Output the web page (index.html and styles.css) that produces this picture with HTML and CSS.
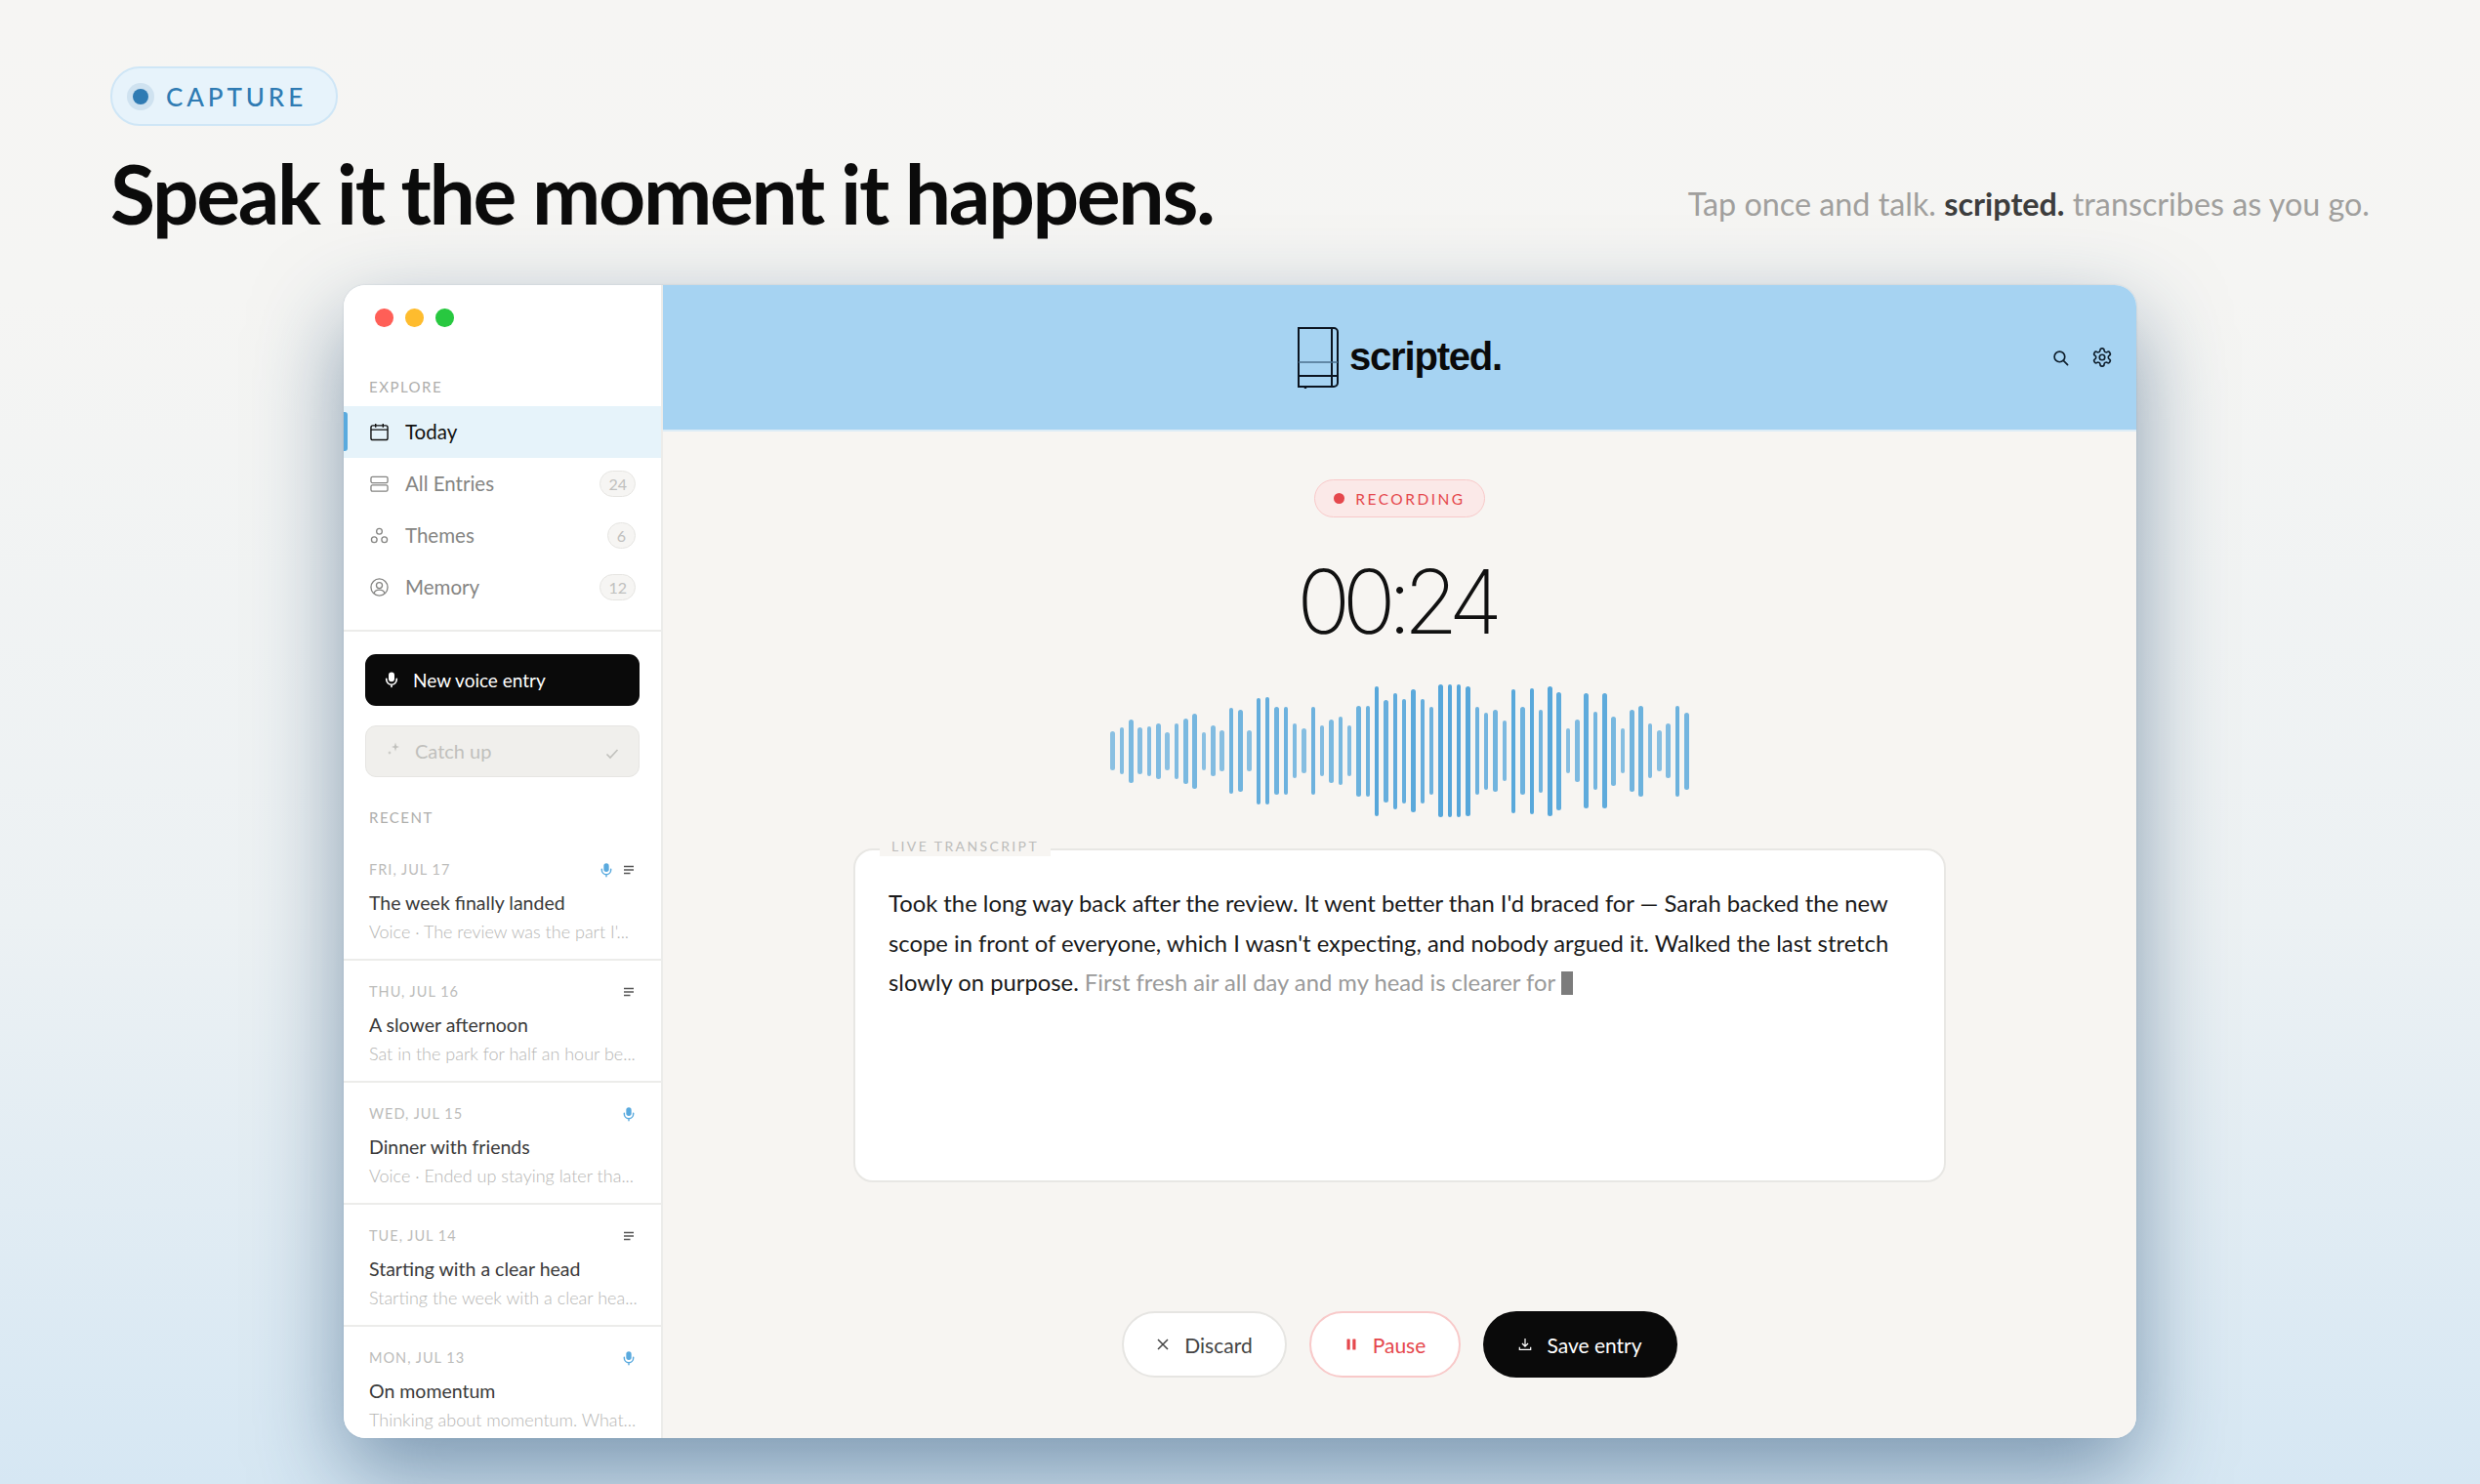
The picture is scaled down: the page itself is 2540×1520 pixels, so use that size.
FILE: index.html
```html
<!DOCTYPE html>
<html lang="en">
<head>
    <meta charset="UTF-8">
    <meta name="viewport" content="width=device-width, initial-scale=1.0">
    <title>scripted. - Capture</title>
    <link rel="stylesheet" href="styles.css">
</head>
<body>
    <svg class="icon-defs" width="0" height="0">
        <symbol id="i-mic" viewBox="0 0 24 24">
            <rect x="8" y="2" width="8" height="13" rx="4" fill="currentColor"/>
            <path d="M5 11v1a7 7 0 0 0 14 0v-1M12 19v3" fill="none" stroke="currentColor" stroke-width="2.2" stroke-linecap="round"/>
        </symbol>
        <symbol id="i-lines" viewBox="0 0 24 24">
            <path d="M2 5h20M2 12h20M2 19h13" fill="none" stroke="currentColor" stroke-width="2.6"/>
        </symbol>
    </svg>

    <header class="page-head">
        <div class="eyebrow"><span class="eyebrow-dot"></span>CAPTURE</div>
        <div class="head-row">
            <h1>Speak it the moment it happens.</h1>
            <p class="tagline">Tap once and talk. <strong>scripted.</strong> transcribes as you go.</p>
        </div>
    </header>

    <div class="window">
        <aside class="sidebar">
            <div class="traffic">
                <span class="light red"></span>
                <span class="light yellow"></span>
                <span class="light green"></span>
            </div>
            <div class="section-label explore-label">EXPLORE</div>
            <nav class="nav">
                <a class="nav-item active">
                    <svg class="nav-icon" viewBox="0 0 20 20" fill="none" stroke="currentColor" stroke-width="1.5"><rect x="1" y="3" width="18" height="15.5" rx="2"/><path d="M1 7.5h18M6 1v4M14 1v4"/></svg>
                    <span>Today</span>
                </a>
                <a class="nav-item">
                    <svg class="nav-icon" viewBox="0 0 20 20" fill="none" stroke="currentColor" stroke-width="1.4"><rect x="1" y="2.5" width="18" height="6.5" rx="1.6"/><rect x="1" y="11.5" width="18" height="6.5" rx="1.6"/></svg>
                    <span>All Entries</span>
                    <b class="count">24</b>
                </a>
                <a class="nav-item">
                    <svg class="nav-icon" viewBox="0 0 20 20" fill="none" stroke="currentColor" stroke-width="1.4"><circle cx="10" cy="5.5" r="3"/><circle cx="4.5" cy="14.5" r="3"/><circle cx="15.5" cy="14.5" r="3"/></svg>
                    <span>Themes</span>
                    <b class="count">6</b>
                </a>
                <a class="nav-item">
                    <svg class="nav-icon" viewBox="0 0 20 20" fill="none" stroke="currentColor" stroke-width="1.4"><circle cx="10" cy="10" r="9"/><circle cx="10" cy="8" r="3.2"/><path d="M4.2 16.6c.8-2.6 3-3.8 5.8-3.8s5 1.2 5.8 3.8"/></svg>
                    <span>Memory</span>
                    <b class="count">12</b>
                </a>
            </nav>
            <div class="side-actions">
                <button class="btn-new">
                    <svg class="btn-new-icon"><use href="#i-mic"/></svg>
                    New voice entry
                </button>
                <button class="btn-catch">
                    <svg class="sparkle" viewBox="0 0 16 16" fill="currentColor"><path d="M9 1.5l1 3.5 3 1-3 1-1 3.5-1-3.5-3-1 3-1zM3 10l.6 1.6 1.4.5-1.4.5L3 14l-.6-1.4-1.4-.5 1.4-.5z"/></svg>
                    <span>Catch up</span>
                    <svg class="check" viewBox="0 0 14 14" fill="none" stroke="currentColor" stroke-width="1.6"><path d="M1.5 7.5l3.5 3.5 7.5-8"/></svg>
                </button>
            </div>
            <div class="section-label recent-label">RECENT</div>
            <div class="entries">
                <div class="entry">
                    <div class="entry-top">
                        <span class="entry-date">FRI, JUL 17</span>
                        <svg class="mini mic"><use href="#i-mic"/></svg>
                        <svg class="mini lines"><use href="#i-lines"/></svg>
                    </div>
                    <div class="entry-title">The week finally landed</div>
                    <div class="entry-preview">Voice · The review was the part I'...</div>
                </div>
                <div class="entry">
                    <div class="entry-top">
                        <span class="entry-date">THU, JUL 16</span>
                        <svg class="mini lines"><use href="#i-lines"/></svg>
                    </div>
                    <div class="entry-title">A slower afternoon</div>
                    <div class="entry-preview">Sat in the park for half an hour be...</div>
                </div>
                <div class="entry">
                    <div class="entry-top">
                        <span class="entry-date">WED, JUL 15</span>
                        <svg class="mini mic"><use href="#i-mic"/></svg>
                    </div>
                    <div class="entry-title">Dinner with friends</div>
                    <div class="entry-preview">Voice · Ended up staying later tha...</div>
                </div>
                <div class="entry">
                    <div class="entry-top">
                        <span class="entry-date">TUE, JUL 14</span>
                        <svg class="mini lines"><use href="#i-lines"/></svg>
                    </div>
                    <div class="entry-title">Starting with a clear head</div>
                    <div class="entry-preview">Starting the week with a clear hea...</div>
                </div>
                <div class="entry">
                    <div class="entry-top">
                        <span class="entry-date">MON, JUL 13</span>
                        <svg class="mini mic"><use href="#i-mic"/></svg>
                    </div>
                    <div class="entry-title">On momentum</div>
                    <div class="entry-preview">Thinking about momentum. What...</div>
                </div>
            </div>
        </aside>

        <main class="main">
            <div class="topbar">
                <div class="brand">
                    <svg class="brand-mark" viewBox="0 0 42 63" fill="none" stroke="#0b1420" stroke-width="2">
                        <path d="M1 1h36a4 4 0 0 1 4 4v52a4 4 0 0 1-4 4H1z"/>
                        <path d="M35 1v60"/>
                        <path d="M1 36h40" stroke="#4a6f8c" stroke-width="1.6"/>
                        <path d="M1 50h40"/>
                        <path d="M8 61v3" stroke-width="2.4"/>
                    </svg>
                    <span class="brand-name">scripted.</span>
                </div>
                <div class="top-icons">
                    <svg class="search" viewBox="0 0 24 24" fill="none" stroke="currentColor" stroke-width="2.4" stroke-linecap="round"><circle cx="10.5" cy="10.5" r="7.5"/><path d="M16 16l6 6"/></svg>
                    <svg class="gear" viewBox="0 0 24 24" fill="none" stroke="currentColor" stroke-width="1.8" stroke-linejoin="round"><path d="M12.22 2h-.44a2 2 0 0 0-2 2v.18a2 2 0 0 1-1 1.73l-.43.25a2 2 0 0 1-2 0l-.15-.08a2 2 0 0 0-2.73.73l-.22.38a2 2 0 0 0 .73 2.73l.15.1a2 2 0 0 1 1 1.72v.51a2 2 0 0 1-1 1.74l-.15.09a2 2 0 0 0-.73 2.73l.22.38a2 2 0 0 0 2.73.73l.15-.08a2 2 0 0 1 2 0l.43.25a2 2 0 0 1 1 1.73V20a2 2 0 0 0 2 2h.44a2 2 0 0 0 2-2v-.18a2 2 0 0 1 1-1.73l.43-.25a2 2 0 0 1 2 0l.15.08a2 2 0 0 0 2.73-.73l.22-.39a2 2 0 0 0-.73-2.73l-.15-.08a2 2 0 0 1-1-1.74v-.5a2 2 0 0 1 1-1.74l.15-.09a2 2 0 0 0 .73-2.73l-.22-.38a2 2 0 0 0-2.73-.73l-.15.08a2 2 0 0 1-2 0l-.43-.25a2 2 0 0 1-1-1.73V4a2 2 0 0 0-2-2z"/><circle cx="12" cy="12" r="3"/></svg>
                </div>
            </div>

            <div class="capture">
                <div class="rec-pill"><span class="rec-dot"></span>RECORDING</div>
                <div class="timer">00:24</div>
                <div class="wave" id="wave"></div>
                <div class="transcript">
                    <span class="transcript-label">LIVE TRANSCRIPT</span>
                    <p>Took the long way back after the review. It went better than I'd braced for — Sarah backed the new scope in front of everyone, which I wasn't expecting, and nobody argued it. Walked the last stretch slowly on purpose. <span class="interim">First fresh air all day and my head is clearer for</span> <span class="caret"></span></p>
                </div>
                <div class="controls">
                    <button class="pill-btn discard">
                        <svg viewBox="0 0 14 14" fill="none" stroke="currentColor" stroke-width="1.5"><path d="M2 2l10 10M12 2L2 12"/></svg>
                        Discard
                    </button>
                    <button class="pill-btn pause">
                        <svg viewBox="0 0 14 14" fill="currentColor"><rect x="2.5" y="1.5" width="3.2" height="11" rx=".6"/><rect x="8.3" y="1.5" width="3.2" height="11" rx=".6"/></svg>
                        Pause
                    </button>
                    <button class="pill-btn save">
                        <svg viewBox="0 0 16 16" fill="none" stroke="currentColor" stroke-width="1.4"><path d="M8 1v9M4.5 6.8L8 10.3l3.5-3.5M1.5 11v3.2h13V11"/></svg>
                        Save entry
                    </button>
                </div>
            </div>
        </main>
    </div>

    <script>
        // bar heights in px, read off the recording
        const bars = [40,48,65,48,51,57,39,57,67,77,39,52,42,88,84,42,109,110,90,90,56,46,90,52,65,70,52,93,93,133,105,119,107,126,107,90,136,136,136,133,90,79,84,62,127,90,129,85,133,121,46,64,118,80,118,71,46,84,93,56,42,56,93,79];
        const wave = document.getElementById('wave');
        bars.forEach((h) => {
            const bar = document.createElement('span');
            bar.style.height = `${h}px`;
            bar.style.opacity = (0.55 + 0.45 * h / 136).toFixed(2);
            wave.appendChild(bar);
        });
    </script>
</body>
</html>
```

FILE: styles.css
```css
* {
    box-sizing: border-box;
}

html, body {
    height: 1520px;
    overflow: hidden;
}

body {
    margin: 0;
    padding: 68px 113px 0;
    font-family: 'Lato', 'Noto Sans', sans-serif;
    color: #0b0b0b;
    background: linear-gradient(180deg, #f6f5f3 0%, #f5f5f3 20%, #ecf1f3 62%, #d6e7f3 100%);
}

.icon-defs {
    position: absolute;
}

.eyebrow {
    display: inline-flex;
    align-items: center;
    gap: 19px;
    height: 61px;
    padding: 0 30px 0 22px;
    font-size: 26px;
    font-weight: 500;
    letter-spacing: 0.15em;
    color: #2f7bb3;
    background: #e7f3fb;
    border: 2px solid #cfe6f6;
    border-radius: 30px;
}

.eyebrow-dot {
    width: 16px;
    height: 16px;
    margin: 0 -1px;
    border-radius: 50%;
    background: #2f7bb3;
    box-shadow: 0 0 0 6px #cfe2f0;
}

.head-row {
    display: flex;
    justify-content: space-between;
    align-items: flex-start;
    margin-top: 19px;
}

h1 {
    margin: 0;
    font-size: 84px;
    line-height: 100px;
    font-weight: 700;
    letter-spacing: -0.028em;
}

.tagline {
    margin: 41px 0 0;
    font-size: 32.3px;
    line-height: 40px;
    color: #a09f9d;
}

.tagline strong {
    font-weight: 700;
    color: #3d3d3d;
}

.window {
    display: flex;
    width: 1836px;
    height: 1181px;
    margin: 44px 0 0 239px;
    border-radius: 22px;
    overflow: hidden;
    background: #fff;
    box-shadow: 0 36px 90px rgba(30, 70, 110, 0.5), 0 0 2px rgba(30, 70, 110, 0.2);
}

/* sidebar */
.sidebar {
    width: 327px;
    flex-shrink: 0;
    background: #fff;
    border-right: 2px solid #ececea;
    overflow: hidden;
}

.traffic {
    display: flex;
    gap: 12.5px;
    padding: 24px 0 0 32px;
}

.light {
    width: 18.5px;
    height: 18.5px;
    border-radius: 50%;
}

.red { background: #ff5f57; }
.yellow { background: #febc2e; }
.green { background: #28c840; }

.section-label {
    padding-left: 26px;
    font-size: 15px;
    line-height: 20px;
    letter-spacing: 0.1em;
    color: #aeaeac;
}

.explore-label {
    margin-top: 51px;
}

.nav {
    margin-top: 10px;
    padding-bottom: 17px;
    border-bottom: 2px solid #ececea;
}

.nav-item {
    display: flex;
    align-items: center;
    height: 53px;
    padding: 0 26px 0 27px;
    font-size: 20.5px;
    color: #858583;
}

.nav-item.active {
    position: relative;
    color: #111;
    background: #e6f3fa;
}

.nav-item.active::before {
    content: "";
    position: absolute;
    left: 0;
    top: 6px;
    width: 4px;
    height: 40px;
    border-radius: 0 3px 3px 0;
    background: #5aaade;
}

.nav-icon {
    width: 19px;
    height: 19px;
    margin-right: 17px;
    flex-shrink: 0;
}

.count {
    min-width: 29px;
    height: 27px;
    margin-left: auto;
    padding: 0 8px;
    font-size: 16px;
    font-weight: 400;
    line-height: 25px;
    text-align: center;
    color: #c0c0be;
    background: #f6f5f3;
    border: 1.5px solid #e6e5e2;
    border-radius: 14px;
}

.side-actions {
    display: flex;
    flex-direction: column;
    gap: 20px;
    padding: 23px 22px 0;
}

.btn-new, .btn-catch {
    display: flex;
    align-items: center;
    height: 53px;
    font-family: inherit;
    border-radius: 11px;
}

.btn-new {
    padding: 0 0 0 18px;
    font-size: 19px;
    color: #fff;
    background: #0a0a0a;
    border: none;
}

.btn-new-icon {
    width: 18px;
    height: 18px;
    margin-right: 13px;
}

.btn-catch {
    padding: 0 20px 0 21px;
    font-size: 20px;
    color: #c0c0bc;
    background: #f0efec;
    border: 1.5px solid #e6e5e2;
}

.sparkle {
    width: 16px;
    height: 16px;
    margin-right: 13px;
    margin-top: -4px;
}

.check {
    width: 14px;
    height: 14px;
    margin: 6px 0 0 auto;
}

.recent-label {
    margin-top: 31px;
}

.entries {
    margin-top: 12px;
}

.entry {
    height: 125px;
    padding: 22px 27px 0 26px;
    border-bottom: 2px solid #ececea;
}

.entry-top {
    display: flex;
    align-items: center;
    height: 20px;
}

.entry-date {
    margin-right: auto;
    font-size: 14.5px;
    letter-spacing: 0.07em;
    color: #bcbcba;
}

.mini {
    width: 12px;
    height: 16px;
    margin-left: 11px;
}

.mini.mic {
    width: 16px;
    margin: 0 -2px 0 9px;
    color: #5aaade;
}

.mini.lines {
    color: #555;
}

.entry-title {
    margin-top: 10px;
    font-size: 19.5px;
    line-height: 28px;
    color: #3a3a3a;
    white-space: nowrap;
}

.entry-preview {
    margin-top: 3px;
    font-size: 18px;
    font-weight: 300;
    line-height: 24px;
    color: #b5b5b3;
    white-space: nowrap;
}

/* main column */
.main {
    flex: 1;
    display: flex;
    flex-direction: column;
    min-width: 0;
    background: #f7f5f2;
}

.topbar {
    position: relative;
    display: flex;
    justify-content: center;
    align-items: center;
    height: 150px;
    flex-shrink: 0;
    background: #a6d3f2;
    border-bottom: 2px solid #dcecf6;
}

.brand {
    display: flex;
    align-items: center;
    gap: 11px;
}

.brand-mark {
    width: 42px;
    height: 63px;
}

.brand-name {
    margin-top: -2px;
    font-family: 'Liberation Sans', Arial, sans-serif;
    font-size: 40px;
    font-weight: 700;
    letter-spacing: -0.03em;
    color: #0a0a0a;
}

.top-icons {
    position: absolute;
    right: 24px;
    top: 63px;
    display: flex;
    align-items: center;
    gap: 23px;
    color: #10202e;
}

.search {
    width: 17px;
    height: 17px;
}

.gear {
    width: 22px;
    height: 22px;
}

.capture {
    flex: 1;
    display: flex;
    flex-direction: column;
    align-items: center;
    padding: 49px 0 62px;
}

.rec-pill {
    display: flex;
    align-items: center;
    gap: 11px;
    height: 39px;
    padding: 0 19px;
    font-size: 15.5px;
    letter-spacing: 0.16em;
    color: #e5484d;
    background: #fbe9e8;
    border: 1.5px solid #f8c9c9;
    border-radius: 20px;
}

.rec-dot {
    width: 11px;
    height: 11px;
    border-radius: 50%;
    background: #e5484d;
}

.timer {
    margin: 36px 8px 0 0;
    font-family: 'Inter', sans-serif;
    font-size: 91px;
    font-weight: 250;
    line-height: 100px;
    letter-spacing: -0.095em;
    color: #111;
}

.wave {
    display: flex;
    align-items: center;
    gap: 4.83px;
    height: 140px;
    margin-top: 33px;
}

.wave span {
    width: 4.5px;
    border-radius: 3px;
    background: #55a6da;
}

.transcript {
    position: relative;
    width: 1119px;
    height: 342px;
    margin-top: 30px;
    padding: 34px 32px 0 34px;
    background: #fff;
    border: 2px solid #e8e7e4;
    border-radius: 20px;
}

.transcript-label {
    position: absolute;
    left: 25px;
    top: -14px;
    padding: 0 12px;
    font-size: 14px;
    line-height: 20px;
    letter-spacing: 0.17em;
    color: #bcbcba;
    background: #f7f5f2;
}

.transcript p {
    margin: 0;
    font-size: 23.8px;
    line-height: 40.5px;
    color: #1a1a1a;
}

.interim {
    color: #9a9a9a;
}

.caret {
    display: inline-block;
    width: 12px;
    height: 24px;
    vertical-align: -4px;
    background: #7c7c7c;
}

.controls {
    display: flex;
    gap: 23px;
    margin-top: auto;
}

.pill-btn {
    display: flex;
    align-items: center;
    justify-content: center;
    height: 68px;
    font-family: inherit;
    font-size: 21px;
    border-radius: 34px;
    background: #fff;
}

.pill-btn svg {
    width: 14px;
    height: 14px;
    margin-right: 15px;
}

.discard {
    width: 169px;
    color: #444;
    border: 2px solid #e6e5e2;
}

.pause {
    width: 155px;
    color: #e5484d;
    border: 2px solid #f8c9c9;
}

.save {
    width: 199px;
    color: #fff;
    background: #0a0a0a;
    border: none;
}
```
